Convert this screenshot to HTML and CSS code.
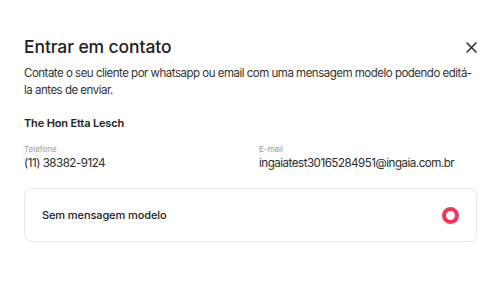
FILE: index.html
```html
<!DOCTYPE html>
<html lang="pt-BR">
<head>
<meta charset="utf-8">
<link rel="stylesheet" href="styles.css">
</head>
<body>
<div class="modal">
  <div class="header">
    <h1 class="title">Entrar em contato</h1>
    <button class="close" aria-label="Fechar">
      <svg width="11" height="11" viewBox="0 0 11 11"><path d="M1 1L10 10M10 1L1 10" stroke="#2b2b2b" stroke-width="1.5" stroke-linecap="round" fill="none"/></svg>
    </button>
  </div>
  <p class="desc">Contate o seu cliente por whatsapp ou email com uma mensagem modelo podendo editá-la antes de enviar.</p>
  <div class="name">The Hon Etta Lesch</div>
  <div class="fields">
    <div class="field">
      <div class="label">Telefone</div>
      <div class="value">(11) 38382-9124</div>
    </div>
    <div class="field">
      <div class="label">E-mail</div>
      <div class="value">ingaiatest30165284951@ingaia.com.br</div>
    </div>
  </div>
  <div class="option">
    <span class="option-text">Sem mensagem modelo</span>
    <span class="radio"></span>
  </div>
</div>
</body>
</html>
```

FILE: styles.css
```css
* { box-sizing: border-box; }
html, body { margin: 0; background: #fff; }
body { font-family: Inter, "Noto Sans", sans-serif; color: #2a2a2a; }
.modal { padding: 35px 24px 24px 24px; width: 501px; }
.header { display: flex; justify-content: space-between; align-items: center; height: 24px; }
.title { margin: 0; font-size: 17.5px; font-weight: 500; line-height: 24px; color: #222; letter-spacing: -0.1px; }
.close { border: 0; background: none; padding: 0; width: 11px; height: 11px; display: flex; }
.desc { margin: 6px 0 0; font-size: 11.5px; line-height: 17px; letter-spacing: -0.5px; color: #333; width: 448px; }
.name { margin-top: 16px; font-size: 11px; font-weight: 600; line-height: 16px; color: #222; letter-spacing: -0.15px; }
.fields { display: grid; grid-template-columns: 235px 1fr; margin-top: 12px; }
.label { font-size: 8px; line-height: 12px; color: #9a9a9a; }
.value { font-size: 11.6px; line-height: 16px; color: #2a2a2a; letter-spacing: -0.5px; }
.option { margin-top: 17px; height: 54px; border: 1px solid #e6e6e6; border-radius: 8px; display: flex; align-items: center; justify-content: space-between; padding: 0 17px; }
.option-text { font-size: 11px; font-weight: 500; color: #222; letter-spacing: -0.1px; }
.radio { width: 17px; height: 17px; border-radius: 50%; border: 4.5px solid #f23456; background: #fff; }
```
